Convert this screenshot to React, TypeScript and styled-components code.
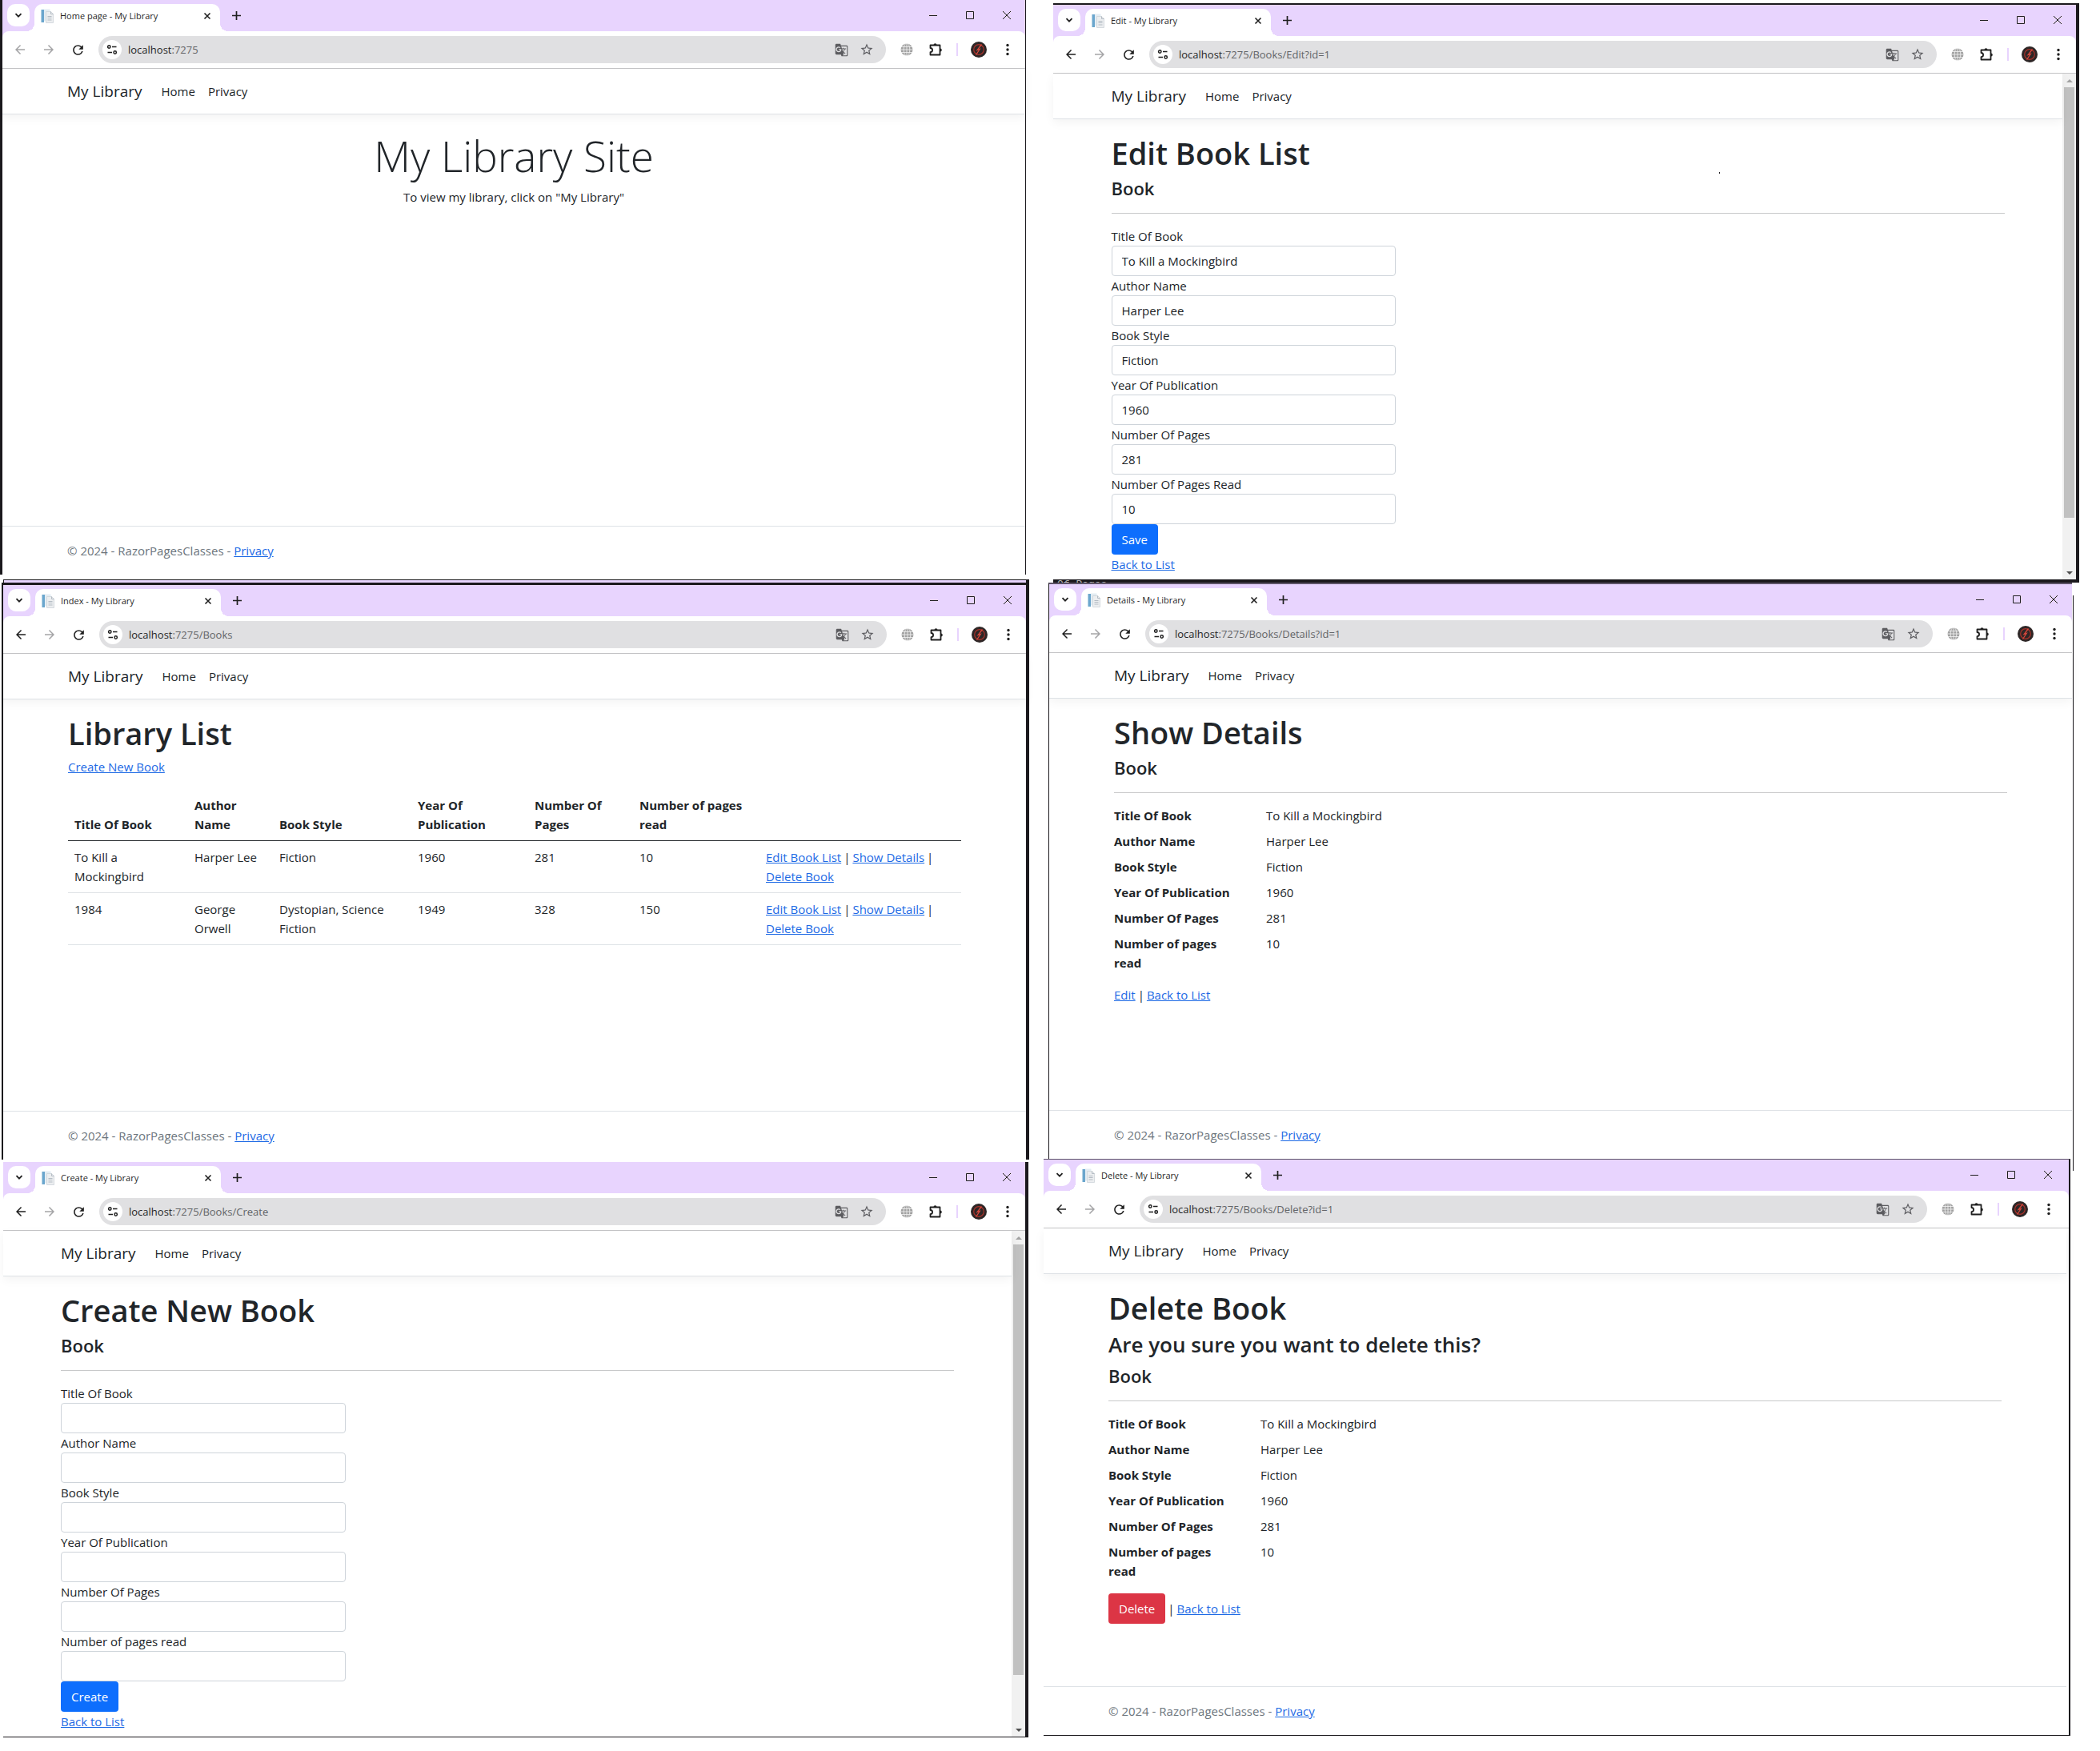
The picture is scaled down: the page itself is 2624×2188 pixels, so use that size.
import React, { useId } from "react";
import styled, { createGlobalStyle } from "styled-components";
import { MdArrowBack, MdArrowForward, MdGTranslate, MdRefresh, MdStarBorder } from "react-icons/md";

const ink = "#212529";
const edge = "#1b191d";
const lilac = "#e8d4fe";

const GlobalStyle = createGlobalStyle`
  *, *::before, *::after { box-sizing: border-box; }
  body {
    margin: 0;
    background: #fff;
    color: ${ink};
    font-family: "Open Sans", "Noto Sans", sans-serif;
    font-size: 15px;
    line-height: 24px;
  }
  h1, h2, h3, h4, p, dl, dd { margin: 0; }
  button, input { font: inherit; color: inherit; }
`;

/* ---------- desktop ---------- */

const Desktop = styled.div`
  display: grid;
  grid-template-columns: 1304fr 1320fr;
  min-height: 100vh;
`;

const Column = styled.div<{ $top?: number }>`
  display: flex;
  flex-direction: column;
  min-width: 0;
  padding-top: ${(p) => p.$top ?? 0}px;
`;

type FrameProps = { $height: number; $borders: string; $margin: string };

const Frame = styled.section<FrameProps>`
  position: relative;
  display: flex;
  flex-direction: column;
  min-height: ${(p) => p.$height}px;
  margin: ${(p) => p.$margin};
  border: 0 solid ${edge};
  border-width: ${(p) => p.$borders};
  background: #fff;
`;

const DetailsFrame = styled(Frame)`
  border-top-color: #5d5468;
  &::after {
    content: "";
    position: absolute;
    top: 14px;
    right: -2px;
    bottom: -15px;
    width: 1px;
    background: ${edge};
  }
`;

const DeleteFrame = styled(Frame)`
  border-top-color: #5d5468;
`;

const WindowBehind = styled.div`
  height: 4px;
  margin: 6px 18px 0 4px;
  border: 1px solid ${edge};
  border-width: 1px 4px 0 1px;
  background: ${lilac};
`;

const EditorBehind = styled.div`
  height: 4px;
  margin: 0 26px 0 12px;
  padding-left: 5px;
  overflow: hidden;
  background: ${edge};
  color: #b4b4b4;
  font: 13px/14px "Liberation Mono", monospace;
`;

/* ---------- browser chrome ---------- */

const Chrome = styled.div`
  background: ${lilac};
`;

const TabStrip = styled.div<{ $end: number }>`
  display: flex;
  align-items: flex-start;
  height: 39px;
  padding: 5px ${(p) => p.$end}px 0 6px;
`;

const BareButton = styled.button`
  display: flex;
  align-items: center;
  justify-content: center;
  padding: 0;
  border: 0;
  background: none;
  color: #1f1f1f;
`;

const TabSearch = styled(BareButton)`
  width: 28px;
  height: 28px;
  margin-right: 6px;
  border-radius: 10px;
  background: #fff;
`;

const Tab = styled.div`
  position: relative;
  display: flex;
  align-items: center;
  gap: 8px;
  width: 232px;
  height: 34px;
  padding: 0 8px 4px;
  border-radius: 10px 10px 0 0;
  background: #fff;
  &::before,
  &::after {
    content: "";
    position: absolute;
    bottom: 0;
    width: 10px;
    height: 10px;
  }
  &::before {
    left: -10px;
    background: radial-gradient(circle at 0 0, transparent 10px, #fff 10px);
  }
  &::after {
    right: -10px;
    background: radial-gradient(circle at 100% 0, transparent 10px, #fff 10px);
  }
`;

const TabTitle = styled.span`
  flex: 1;
  color: #1f1f1f;
  font-size: 11px;
  line-height: 20px;
  white-space: nowrap;
`;

const TabClose = styled(BareButton)`
  width: 16px;
  height: 16px;
`;

const NewTab = styled(BareButton)`
  width: 28px;
  height: 28px;
  margin-left: 6px;
`;

const WindowControls = styled.div`
  display: flex;
  margin-left: auto;
`;

const ControlButton = styled(BareButton)`
  width: 46px;
  height: 28px;
`;

const Toolbar = styled.div<{ $end: number }>`
  display: flex;
  align-items: center;
  height: 47px;
  padding: 0 ${(p) => p.$end + 4}px 0 4px;
  border-bottom: 1px solid #c6c6c8;
  border-radius: 8px 8px 0 0;
  background: #fff;
`;

const ToolButton = styled(BareButton)<{ $muted?: boolean }>`
  width: 36px;
  height: 34px;
  color: ${(p) => (p.$muted ? "#a5a5a7" : "#1f1f1f")};
`;

const AddressBar = styled.div`
  display: flex;
  flex: 1;
  align-items: center;
  height: 34px;
  margin: 0 8px;
  padding: 0 8px 0 5px;
  border-radius: 17px;
  background: #e0e0e2;
`;

const SiteInfo = styled(BareButton)`
  width: 24px;
  height: 24px;
  margin-right: 8px;
  border-radius: 12px;
  background: #fff;
`;

const Address = styled.div`
  flex: 1;
  color: #626467;
  font-size: 13px;
  line-height: 20px;
`;

const Host = styled.span`
  color: #1f1f1f;
`;

const BarButton = styled(BareButton)`
  width: 32px;
  height: 32px;
  color: #5c5c60;
`;

const DividerSlot = styled.div`
  display: flex;
  justify-content: center;
  width: 18px;
  &::before {
    content: "";
    width: 2px;
    height: 16px;
    background: ${lilac};
  }
`;

const Stroke = ({ d, size = 10, width = 1 }: { d: string; size?: number; width?: number }) => (
  <svg width={size} height={size} viewBox={`0 0 ${size} ${size}`} fill="none" stroke="currentColor" strokeWidth={width}>
    <path d={d} />
  </svg>
);

const Favicon = () => (
  <svg width="16" height="20" viewBox="0 0 16 20">
    <path d="M0.5 2h3.5v16h-3.5z" fill="#6ba6cd" />
    <path d="M4 1.500h7.500v15H4z" fill="#e3ecf3" />
    <path d="M6.500 4.500h6l3 3V18.500h-9z" fill="#eceef0" stroke="#cdd3d8" strokeWidth=".8" />
    <path d="M12.500 4.500v3h3M8.500 10.500h5M8.500 12.500h5M8.500 15h5" fill="none" stroke="#b4bcc4" strokeWidth="1" />
  </svg>
);

const TuneIcon = () => (
  <svg width="14" height="14" viewBox="0 0 14 14" fill="none" stroke="#1f1f1f" strokeWidth="1.500">
    <circle cx="3.300" cy="3.500" r="1.700" />
    <path d="M7 3.500h5.500M1.500 10.500h5.500" />
    <circle cx="10.700" cy="10.500" r="1.700" />
  </svg>
);

const GlobeIcon = () => (
  <svg width="16" height="16" viewBox="0 0 16 16">
    <circle cx="8" cy="8" r="7.500" fill="#a2a2a2" />
    <g fill="none" stroke="#f4f4f4" strokeWidth=".8">
      <path d="M8 0v16M0 8h16M1 4.500h14M1 11.500h14" />
      <ellipse cx="8" cy="8" rx="3.800" ry="8" />
    </g>
  </svg>
);

const PuzzleIcon = () => (
  <svg width="18" height="18" viewBox="0 0 18 18">
    <path
      d="M2.500 3.500H14.500V15.500H2.500V12.200a2.600 2.600 0 0 0 0-5.200z"
      fill="none"
      stroke="#1f1f1f"
      strokeWidth="1.800"
      strokeLinejoin="round"
    />
    <path d="M6.500 3.200a2 2 0 0 1 4 0zM14.800 7.500a2 2 0 0 1 0 4z" fill="#1f1f1f" />
  </svg>
);

const AvatarIcon = () => (
  <svg width="20" height="20" viewBox="0 0 20 20">
    <circle cx="10" cy="10" r="10" fill="#2e2626" />
    <circle cx="10" cy="10" r="6.300" fill="none" stroke="#a8322a" strokeWidth="1.200" />
    <path d="M13.500 3.500L8.200 10.500L11.200 9.500L6.500 16.500" fill="none" stroke="#d8483c" strokeWidth="1.300" />
  </svg>
);

const DotsIcon = () => (
  <svg width="4" height="16" viewBox="0 0 4 16" fill="#1f1f1f">
    <circle cx="2" cy="2.500" r="1.700" />
    <circle cx="2" cy="8" r="1.700" />
    <circle cx="2" cy="13.500" r="1.700" />
  </svg>
);

type BrowserProps = { title: string; path?: string; canGoBack?: boolean; end?: number };

const BrowserChrome = ({ title, path = "", canGoBack = true, end = 0 }: BrowserProps) => (
  <Chrome>
    <TabStrip $end={end}>
      <TabSearch aria-label="Search tabs">
        <Stroke d="M1.500 3.200L5 6.700L8.500 3.200" width={1.8} />
      </TabSearch>
      <Tab>
        <Favicon />
        <TabTitle>{title} - My Library</TabTitle>
        <TabClose aria-label="Close tab">
          <Stroke d="M1.500 1.500L8.500 8.500M8.500 1.500L1.500 8.500" width={1.6} />
        </TabClose>
      </Tab>
      <NewTab aria-label="New tab">
        <Stroke d="M5.500 0V11M0 5.500H11" size={11} width={1.7} />
      </NewTab>
      <WindowControls>
        <ControlButton aria-label="Minimize">
          <Stroke d="M0 5.500H10" />
        </ControlButton>
        <ControlButton aria-label="Maximize">
          <Stroke d="M0.500 0.500H9.500V9.500H0.500Z" />
        </ControlButton>
        <ControlButton aria-label="Close">
          <Stroke d="M0 0L10 10M10 0L0 10" />
        </ControlButton>
      </WindowControls>
    </TabStrip>
    <Toolbar $end={end}>
      <ToolButton aria-label="Back" $muted={!canGoBack}>
        <MdArrowBack size={18} />
      </ToolButton>
      <ToolButton aria-label="Forward" $muted>
        <MdArrowForward size={18} />
      </ToolButton>
      <ToolButton aria-label="Reload">
        <MdRefresh size={19} />
      </ToolButton>
      <AddressBar>
        <SiteInfo aria-label="Site information">
          <TuneIcon />
        </SiteInfo>
        <Address>
          <Host>localhost</Host>:7275{path}
        </Address>
        <BarButton aria-label="Translate">
          <MdGTranslate size={17} />
        </BarButton>
        <BarButton aria-label="Bookmark">
          <MdStarBorder size={18} />
        </BarButton>
      </AddressBar>
      <ToolButton aria-label="Site extension">
        <GlobeIcon />
      </ToolButton>
      <ToolButton aria-label="Extensions">
        <PuzzleIcon />
      </ToolButton>
      <DividerSlot />
      <ToolButton aria-label="Profile">
        <AvatarIcon />
      </ToolButton>
      <ToolButton aria-label="Menu">
        <DotsIcon />
      </ToolButton>
    </Toolbar>
  </Chrome>
);

/* ---------- scroll bar ---------- */

const Body = styled.div`
  display: flex;
  flex: 1;
`;

const Track = styled.div`
  display: flex;
  flex-direction: column;
  width: 17px;
  background: #f1f1f1;
`;

const TrackArrow = styled.div<{ $down?: boolean }>`
  display: flex;
  align-items: center;
  justify-content: center;
  height: 17px;
  &::before {
    content: "";
    border: 4px solid transparent;
    border-width: ${(p) => (p.$down ? "4px 4px 0" : "0 4px 4px")};
    border-top-color: #505050;
    border-bottom-color: #a3a3a3;
  }
`;

const Thumb = styled.div`
  flex: 9;
  margin: 0 2px;
  background: #c1c1c1;
`;

const TrackRest = styled.div`
  flex: 1;
`;

const ScrollBar = () => (
  <Track>
    <TrackArrow />
    <Thumb />
    <TrackRest />
    <TrackArrow $down />
  </Track>
);

/* ---------- site ---------- */

const Site = styled.div<{ $end: number }>`
  position: relative;
  display: flex;
  flex: 1;
  flex-direction: column;
  min-width: 0;
  padding-right: ${(p) => p.$end}px;
`;

const Container = styled.div`
  width: 100%;
  max-width: 1140px;
  margin: 0 auto;
  padding: 0 12px;
`;

const SiteHeader = styled.header`
  margin-bottom: 16px;
  border-bottom: 1px solid #dee2e6;
  box-shadow: 0 4px 12px rgba(0, 0, 0, 0.05);
`;

const Nav = styled(Container).attrs({ as: "nav" })`
  display: flex;
  align-items: center;
  gap: 16px;
  height: 56px;
`;

const Brand = styled.a`
  margin-right: 8px;
  color: ${ink};
  font-size: 19px;
  line-height: 30px;
  text-decoration: none;
`;

const NavLink = styled.a`
  color: ${ink};
  text-decoration: none;
`;

const Link = styled.a`
  color: #1d6ae5;
`;

const SiteFooter = styled.footer`
  margin-top: auto;
  border-top: 1px solid #dee2e6;
  color: #6c757d;
  line-height: 60px;
`;

const Display = styled.h1`
  margin-bottom: 6px;
  padding-top: 2px;
  font-size: 53px;
  font-weight: 300;
  line-height: 67px;
  text-align: center;
`;

const Lead = styled.p`
  text-align: center;
`;

const Title = styled.h1`
  margin-bottom: 6px;
  padding-top: 2px;
  font-size: 38px;
  font-weight: 600;
  line-height: 48px;
`;

const Question = styled.h3`
  margin-bottom: 8px;
  font-size: 26px;
  font-weight: 600;
  line-height: 33px;
`;

const Subtitle = styled.h4`
  font-size: 22px;
  font-weight: 600;
  line-height: 29px;
`;

const Rule = styled.hr`
  margin: 16px 0;
  border: 0;
  border-top: 1px solid #c8c9ca;
`;

const Speck = styled.span`
  position: absolute;
  top: 123px;
  left: 66%;
  width: 1px;
  height: 2px;
  background: ${edge};
`;

type SiteProps = { children: React.ReactNode; footer?: boolean; end?: number };

const SitePage = ({ children, footer = true, end = 0 }: SiteProps) => (
  <Site $end={end}>
    <SiteHeader>
      <Nav>
        <Brand href="#books">My Library</Brand>
        <NavLink href="#home">Home</NavLink>
        <NavLink href="#privacy">Privacy</NavLink>
      </Nav>
    </SiteHeader>
    <Container as="main">{children}</Container>
    {footer && (
      <SiteFooter>
        <Container>
          © 2024 - RazorPagesClasses - <Link href="#privacy">Privacy</Link>
        </Container>
      </SiteFooter>
    )}
  </Site>
);

/* ---------- book form ---------- */

const Form = styled.form`
  display: flex;
  flex-direction: column;
  align-items: flex-start;
  width: calc(100% / 3 - 16px);
`;

const Label = styled.label`
  height: 24px;
`;

const TextBox = styled.input`
  width: 100%;
  height: 38px;
  padding: 0 12px;
  border: 1px solid #ced4da;
  border-radius: 4px;
  background: #fff;
`;

const Action = styled.button<{ $color: string }>`
  height: 38px;
  padding: 0 13px;
  border: 0;
  border-radius: 4px;
  background: ${(p) => p.$color};
  color: #fff;
`;

type FieldData = { label: string; value?: string };

const Field = ({ label, value = "" }: FieldData) => {
  const id = useId();
  return (
    <>
      <Label htmlFor={id}>{label}</Label>
      <TextBox id={id} type="text" defaultValue={value} />
    </>
  );
};

const BookForm = ({ fields, submit }: { fields: FieldData[]; submit: string }) => (
  <>
    <Form onSubmit={(e) => e.preventDefault()}>
      {fields.map((f) => (
        <Field key={f.label} {...f} />
      ))}
      <Action $color="#0d6efd">{submit}</Action>
    </Form>
    <Link href="#books">Back to List</Link>
  </>
);

/* ---------- book table ---------- */

const BookTable = styled.table`
  width: 100%;
  margin-top: 16px;
  border-collapse: separate;
  border-spacing: 0;
  table-layout: fixed;
  th,
  td {
    padding: 8px;
    text-align: left;
  }
  th {
    height: 64px;
    padding-right: 16px;
    vertical-align: bottom;
    font-weight: 700;
  }
  td {
    vertical-align: top;
    border-bottom: 1px solid #dee2e6;
  }
  thead th {
    border-bottom: 1px solid ${ink};
  }
`;

const Col = styled.col<{ $share?: number }>`
  width: ${(p) => (p.$share ? `calc(100% * ${p.$share} / 1116)` : "auto")};
`;

const shares = [150, 106, 173, 146, 131, 158, 252];
const headings = ["Title Of Book", "Author Name", "Book Style", "Year Of Publication", "Number Of Pages", "Number of pages read"];
const books = [
  ["To Kill a Mockingbird", "Harper Lee", "Fiction", "1960", "281", "10"],
  ["1984", "George Orwell", "Dystopian, Science Fiction", "1949", "328", "150"],
];

/* ---------- book details ---------- */

const Details = styled.dl`
  display: grid;
  grid-template-columns: 166px 1fr;
  column-gap: 24px;
  margin-bottom: 16px;
  dt {
    padding-right: 16px;
    font-weight: 700;
  }
  dd {
    margin-bottom: 8px;
  }
`;

const LinkRow = styled.div`
  display: flex;
  gap: 3px;
`;

const DeleteForm = styled.form`
  display: flex;
  align-items: center;
  gap: 3px;
`;

const BookDetails = () => (
  <Details>
    {headings.map((h, i) => (
      <React.Fragment key={h}>
        <dt>{h}</dt>
        <dd>{books[0][i]}</dd>
      </React.Fragment>
    ))}
  </Details>
);

const editFields: FieldData[] = [
  { label: "Title Of Book", value: "To Kill a Mockingbird" },
  { label: "Author Name", value: "Harper Lee" },
  { label: "Book Style", value: "Fiction" },
  { label: "Year Of Publication", value: "1960" },
  { label: "Number Of Pages", value: "281" },
  { label: "Number Of Pages Read", value: "10" },
];

const createFields: FieldData[] = headings.map((label) => ({ label }));

export default function App() {
  return (
    <>
      <GlobalStyle />
      <Desktop>
        <Column>
          <Frame $height={718} $borders="0 1px 0 3px" $margin="0 22px 0 0">
            <BrowserChrome title="Home page" canGoBack={false} />
            <SitePage>
              <Display>My Library Site</Display>
              <Lead>To view my library, click on "My Library"</Lead>
            </SitePage>
          </Frame>

          <WindowBehind />
          <Frame $height={721} $borders="3px 4px 0 2px" $margin="0 18px 0 2px">
            <BrowserChrome title="Index" path="/Books" />
            <SitePage>
              <Title>Library List</Title>
              <Link href="#create">Create New Book</Link>
              <BookTable>
                <colgroup>
                  {shares.map((s) => (
                    <Col key={s} $share={s} />
                  ))}
                </colgroup>
                <thead>
                  <tr>
                    {headings.map((h) => (
                      <th key={h}>{h}</th>
                    ))}
                    <th />
                  </tr>
                </thead>
                <tbody>
                  {books.map((book) => (
                    <tr key={book[0]}>
                      {book.map((cell) => (
                        <td key={cell}>{cell}</td>
                      ))}
                      <td>
                        <LinkRow>
                          <Link href="#edit">Edit Book List</Link>
                          <span>|</span>
                          <Link href="#details">Show Details</Link>
                          <span>|</span>
                        </LinkRow>
                        <Link href="#delete">Delete Book</Link>
                      </td>
                    </tr>
                  ))}
                </tbody>
              </BookTable>
            </SitePage>
          </Frame>

          <Frame $height={719} $borders="0 4px 1px 0" $margin="3px 19px 0 4px">
            <BrowserChrome title="Create" path="/Books/Create" />
            <Body>
              <SitePage footer={false}>
                <Title>Create New Book</Title>
                <Subtitle>Book</Subtitle>
                <Rule />
                <BookForm fields={createFields} submit="Create" />
              </SitePage>
              <ScrollBar />
            </Body>
          </Frame>
        </Column>

        <Column $top={4}>
          <Frame $height={720} $borders="2px 4px 0 0" $margin="0 26px 0 12px">
            <BrowserChrome title="Edit" path="/Books/Edit?id=1" />
            <Body>
              <SitePage footer={false}>
                <Title>Edit Book List</Title>
                <Subtitle>Book</Subtitle>
                <Rule />
                <BookForm fields={editFields} submit="Save" />
                <Speck />
              </SitePage>
              <ScrollBar />
            </Body>
          </Frame>
          <EditorBehind>Of Pages</EditorBehind>

          <DetailsFrame $height={720} $borders="2px 0 0 1px" $margin="0 35px 0 6px">
            <BrowserChrome title="Details" path="/Books/Details?id=1" />
            <SitePage>
              <Title>Show Details</Title>
              <Subtitle>Book</Subtitle>
              <Rule />
              <BookDetails />
              <LinkRow>
                <Link href="#edit">Edit</Link>
                <span>|</span>
                <Link href="#books">Back to List</Link>
              </LinkRow>
            </SitePage>
          </DetailsFrame>

          <DeleteFrame $height={721} $borders="1px 2px 1px 0" $margin="0 37px 0 0">
            <BrowserChrome title="Delete" path="/Books/Delete?id=1" end={3} />
            <SitePage end={3}>
              <Title>Delete Book</Title>
              <Question>Are you sure you want to delete this?</Question>
              <Subtitle>Book</Subtitle>
              <Rule />
              <BookDetails />
              <DeleteForm onSubmit={(e) => e.preventDefault()}>
                <Action $color="#dc3545">Delete</Action>
                <span>|</span>
                <Link href="#books">Back to List</Link>
              </DeleteForm>
            </SitePage>
          </DeleteFrame>
        </Column>
      </Desktop>
    </>
  );
}
